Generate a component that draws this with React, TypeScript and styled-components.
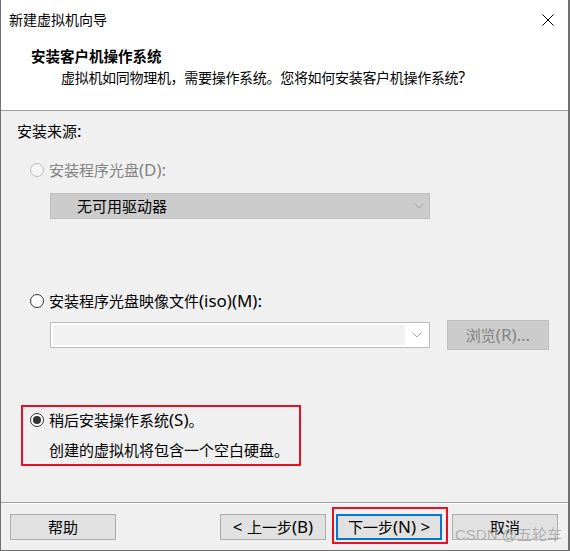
import * as React from "react";
import styled, { createGlobalStyle, css } from "styled-components";

const GlobalStyle = createGlobalStyle`
  html, body {
    margin: 0;
    padding: 0;
    background: #ffffff;
  }
  body {
    font-family: "Noto Sans", "Noto Sans CJK SC", sans-serif;
    font-size: 15px;
    color: #000000;
  }
`;

const Window = styled.div`
  width: 570px;
  height: 551px;
  box-sizing: border-box;
  border-left: 1px solid #707070;
  border-right: 2px solid #707070;
  border-bottom: 1px solid #707070;
  display: flex;
  flex-direction: column;
  background: #f0f0f0;
  overflow: hidden;
`;

const TitleBar = styled.div`
  height: 40px;
  flex: 0 0 auto;
  background: #ffffff;
  display: flex;
  align-items: center;
  justify-content: space-between;
  padding: 0 14px 0 8px;
  font-size: 14px;
  line-height: 20px;
`;

const Header = styled.div`
  flex: 0 0 auto;
  height: 71px;
  box-sizing: border-box;
  background: #ffffff;
  border-bottom: 1px solid #a0a0a0;
  padding-top: 6px;
`;

const Heading = styled.div`
  font-weight: bold;
  font-size: 14.5px;
  line-height: 20px;
  padding-left: 30px;
`;

const Subtitle = styled.div`
  font-size: 14px;
  letter-spacing: -0.3px;
  line-height: 20px;
  margin-top: 2px;
  padding-left: 60px;
`;

// Latin glyphs in the original UI font run larger than the CJK ones
const Lat = styled.span`
  font-size: 1.13em;
  line-height: 1;
  letter-spacing: 0;
`;

const Body = styled.div`
  flex: 1 1 auto;
  padding: 10px 0 0 16px;
`;

const Text = styled.div<{ $muted?: boolean }>`
  height: 20px;
  line-height: 20px;
  white-space: nowrap;
  color: ${p => (p.$muted ? "#838383" : "#000000")};
`;

const RadioRow = styled.div<{ $top: number; $left?: number }>`
  display: flex;
  align-items: center;
  gap: 5px;
  height: 20px;
  margin-top: ${p => p.$top}px;
  margin-left: ${p => p.$left ?? 0}px;
`;

const RadioCircle = styled.span<{ $disabled?: boolean; $checked?: boolean }>`
  width: 14px;
  height: 14px;
  box-sizing: border-box;
  border-radius: 50%;
  flex: 0 0 auto;
  display: flex;
  align-items: center;
  justify-content: center;
  border: 1px solid ${p => (p.$disabled ? "#bcbcbc" : "#333333")};
  background: ${p => (p.$disabled ? "#f4f4f4" : "#ffffff")};
  ${p =>
    p.$checked &&
    css`
      &::after {
        content: "";
        width: 8px;
        height: 8px;
        border-radius: 50%;
        background: #333333;
      }
    `}
`;

const DisabledSelect = styled.div`
  margin: 13px 0 0 33px;
  width: 380px;
  height: 26px;
  box-sizing: border-box;
  background: #cccccc;
  border: 1px solid #bfbfbf;
  display: flex;
  align-items: center;
  justify-content: space-between;
  padding: 0 5px 0 26px;
  line-height: 20px;
`;

const FileRow = styled.div`
  display: flex;
  align-items: center;
  gap: 17px;
  margin: 9px 0 0 33px;
  height: 30px;
`;

const Combo = styled.div`
  width: 380px;
  height: 26px;
  box-sizing: border-box;
  background: #ffffff;
  border: 1px solid #bcbcbc;
  display: flex;
  padding: 2px 0 2px 2px;
`;

const ComboField = styled.div`
  flex: 1 1 auto;
  background: #f2f2f2;
`;

const ComboArrow = styled.div`
  width: 24px;
  display: flex;
  align-items: center;
  justify-content: center;
`;

const DisabledButton = styled.div`
  width: 102px;
  height: 30px;
  box-sizing: border-box;
  background: #cccccc;
  border: 1px solid #bfbfbf;
  color: #838383;
  display: flex;
  align-items: center;
  justify-content: center;
  line-height: 20px;
`;

const Highlight = styled.div`
  width: 280px;
  box-sizing: border-box;
  margin: 55px 0 0 4px;
  border: 2px solid #e81123;
  padding: 3px 0 4px 7px;
`;

const Description = styled.div`
  line-height: 20px;
  margin: 10px 0 0 19px;
  white-space: nowrap;
`;

const Footer = styled.div`
  position: relative;
  flex: 0 0 48px;
  box-sizing: border-box;
  border-top: 1px solid #a0a0a0;
  box-shadow: inset 0 1px 0 #ffffff;
  display: flex;
  align-items: flex-start;
  padding: 11px 10px 0 9px;
`;

const RightGroup = styled.div`
  margin-left: auto;
  display: flex;
  align-items: flex-start;
`;

const Button = styled.div<{ $primary?: boolean }>`
  width: 106px;
  height: 26px;
  box-sizing: border-box;
  background: #e1e1e1;
  border: ${p => (p.$primary ? "2px solid #0078d7" : "1px solid #adadad")};
  display: flex;
  align-items: center;
  justify-content: center;
  line-height: 20px;
  white-space: pre;
`;

const FocusFrame = styled.div`
  border: 2px solid #e81123;
  padding: 5px 4px 2px 2px;
  margin: -7px 4px 0 6px;
`;

const Watermark = styled.div`
  position: absolute;
  left: 454px;
  top: 23px;
  font-family: "Liberation Sans", "Noto Sans CJK SC", sans-serif;
  font-size: 15px;
  line-height: 18px;
  color: rgba(120, 120, 120, 0.6);
  text-shadow: 0 0 1px rgba(255, 255, 255, 0.8);
  pointer-events: none;
  white-space: nowrap;
`;

const Chevron = ({ color }: { color: string }) => (
  <svg width="10" height="6" viewBox="0 0 10 6">
    <polyline points="0.5,0.5 5,5 9.5,0.5" fill="none" stroke={color} strokeWidth="1" />
  </svg>
);

const CloseIcon = () => (
  <svg width="12" height="12" viewBox="0 0 12 12">
    <path d="M0.5 0.5 L11.5 11.5 M11.5 0.5 L0.5 11.5" stroke="#000" strokeWidth="1" />
  </svg>
);

export default function App() {
  return (
    <>
      <GlobalStyle />
      <Window>
        <TitleBar>
          <span>新建虚拟机向导</span>
          <CloseIcon />
        </TitleBar>
        <Header>
          <Heading>安装客户机操作系统</Heading>
          <Subtitle>
            虚拟机如同物理机，需要操作系统。您将如何安装客户机操作系统<Lat>?</Lat>
          </Subtitle>
        </Header>
        <Body>
          <Text>
            安装来源<Lat>:</Lat>
          </Text>

          <RadioRow $top={19} $left={13}>
            <RadioCircle $disabled />
            <Text $muted>
              安装程序光盘<Lat>(D):</Lat>
            </Text>
          </RadioRow>
          <DisabledSelect>
            <span>无可用驱动器</span>
            <Chevron color="#a8a8a8" />
          </DisabledSelect>

          <RadioRow $top={72} $left={13}>
            <RadioCircle />
            <Text>
              安装程序光盘映像文件<Lat>(iso)(M):</Lat>
            </Text>
          </RadioRow>
          <FileRow>
            <Combo>
              <ComboField />
              <ComboArrow>
                <Chevron color="#a8a8a8" />
              </ComboArrow>
            </Combo>
            <DisabledButton>
              浏览<Lat>(R)...</Lat>
            </DisabledButton>
          </FileRow>

          <Highlight>
            <RadioRow $top={0}>
              <RadioCircle $checked />
              <Text>
                稍后安装操作系统<Lat>(S)</Lat>。
              </Text>
            </RadioRow>
            <Description>创建的虚拟机将包含一个空白硬盘。</Description>
          </Highlight>
        </Body>
        <Footer>
          <Button>帮助</Button>
          <RightGroup>
            <Button>
              <Lat>{"< "}</Lat>上一步<Lat>(B)</Lat>
            </Button>
            <FocusFrame>
              <Button $primary>
                下一步<Lat>{"(N) >"}</Lat>
              </Button>
            </FocusFrame>
            <Button>取消</Button>
          </RightGroup>
          <Watermark>CSDN @五轮车</Watermark>
        </Footer>
      </Window>
    </>
  );
}
